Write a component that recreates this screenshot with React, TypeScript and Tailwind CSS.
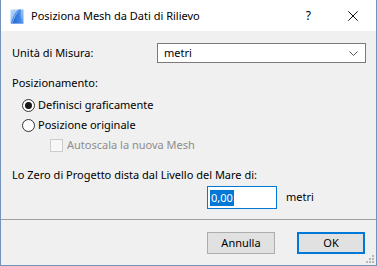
import React from "react";

const font = { fontFamily: '"Noto Sans", "Open Sans", sans-serif' };

function AppIcon() {
  return (
    <svg width="14" height="15" viewBox="0 0 14 15">
      <defs>
        <linearGradient id="g1" x1="0" y1="0" x2="1" y2="1">
          <stop offset="0" stopColor="#bcd8f7" />
          <stop offset="1" stopColor="#5d9ef0" />
        </linearGradient>
        <linearGradient id="g2" x1="0" y1="0" x2="1" y2="0">
          <stop offset="0" stopColor="#1f5fd0" />
          <stop offset="1" stopColor="#4e95ef" />
        </linearGradient>
      </defs>
      <rect x="0.5" y="0.5" width="13" height="14" fill="url(#g1)" />
      <path d="M1 14.5 C3 9 5 3 9 0.5 L11 0.5 C10 5 10.5 10 13.5 14.5 Z" fill="url(#g2)" />
      <path d="M2 14.5 C4 9 6 4 9 1.5" stroke="#9fc6f5" strokeWidth="0.8" fill="none" />
    </svg>
  );
}

function Radio({ checked }: { checked?: boolean }) {
  return (
    <div className="w-[13px] h-[13px] rounded-full border border-[#333333] bg-white flex items-center justify-center">
      {checked && <div className="w-[7px] h-[7px] rounded-full bg-[#1a1a1a]" />}
    </div>
  );
}

export default function App() {
  return (
    <div
      className="w-[377px] h-[266px] flex flex-col border-x border-b border-[#7393b8] bg-[#f0f0f0] text-[11px] text-black overflow-hidden"
      style={font}
    >
      {/* Title bar */}
      <div className="h-[31px] bg-white flex items-center shrink-0">
        <div className="ml-[9px] mt-[1px]">
          <AppIcon />
        </div>
        <span className="ml-[7px] text-[11px] leading-none text-black">Posiziona Mesh da Dati di Rilievo</span>
        <span className="ml-auto mr-[37px] text-[12px] leading-none">?</span>
        <svg className="mr-[18px]" width="10" height="10" viewBox="0 0 10 10">
          <path d="M0.3 0.3 L9.7 9.7 M9.7 0.3 L0.3 9.7" stroke="#111" strokeWidth="1" />
        </svg>
      </div>

      {/* Body */}
      <div className="flex flex-col pl-[11px] pr-[10px]">
        <div className="mt-[12px] h-[20px] flex items-center">
          <span className="w-[145px]">Unità di Misura:</span>
          <div className="w-[209px] h-[20px] border border-[#7a7a7a] bg-white flex items-center pl-[6px] pr-[7px]">
            <span>metri</span>
            <svg className="ml-auto" width="9" height="5" viewBox="0 0 9 5">
              <path d="M0.5 0.5 L4.5 4.5 L8.5 0.5" stroke="#555" strokeWidth="1" fill="none" />
            </svg>
          </div>
        </div>

        <div className="mt-[12px] h-[16px] flex items-center">Posizionamento:</div>

        <div className="mt-[6px] h-[16px] flex items-center pl-[10px] gap-[3px]">
          <Radio checked />
          <span>Definisci graficamente</span>
        </div>
        <div className="mt-[4px] h-[16px] flex items-center pl-[10px] gap-[3px]">
          <Radio />
          <span>Posizione originale</span>
        </div>
        <div className="mt-[4px] h-[16px] flex items-center pl-[38px] gap-[4px]">
          <div className="w-[13px] h-[13px] border border-[#cccccc] bg-[#f7f7f7]" />
          <span className="text-[#8d8d8d]">Autoscala la nuova Mesh</span>
        </div>

        <div className="mt-[14px] h-[16px] flex items-center">Lo Zero di Progetto dista dal Livello del Mare di:</div>

        <div className="mt-[3px] h-[23px] flex items-center pl-[195px]">
          <div className="w-[70px] h-[23px] border border-[#0078d7] bg-white flex items-center pl-[2px]">
            <span className="bg-[#0078d7] text-white leading-[16px] px-[1px]">0,00</span>
          </div>
          <span className="ml-[9px]">metri</span>
        </div>
      </div>

      <div className="mt-[10px] h-px bg-[#a0a0a0] shrink-0" />

      <div className="mt-[12px] flex items-center pl-[206px] gap-[22px]">
        <div className="w-[68px] h-[22px] border border-[#adadad] bg-[#e1e1e1] flex items-center justify-center">
          Annulla
        </div>
        <div className="w-[68px] h-[22px] border-2 border-[#0078d7] bg-[#e1e1e1] flex items-center justify-center">
          OK
        </div>
      </div>

      <div className="flex-1 flex justify-end items-end pr-[1px] pb-[1px]">
        <svg width="10" height="10" viewBox="0 0 10 10">
          <rect x="7" y="1" width="2" height="2" fill="#b8b8b8" />
          <rect x="4" y="4" width="2" height="2" fill="#b8b8b8" />
          <rect x="7" y="4" width="2" height="2" fill="#b8b8b8" />
          <rect x="1" y="7" width="2" height="2" fill="#b8b8b8" />
          <rect x="4" y="7" width="2" height="2" fill="#b8b8b8" />
          <rect x="7" y="7" width="2" height="2" fill="#b8b8b8" />
        </svg>
      </div>
    </div>
  );
}
